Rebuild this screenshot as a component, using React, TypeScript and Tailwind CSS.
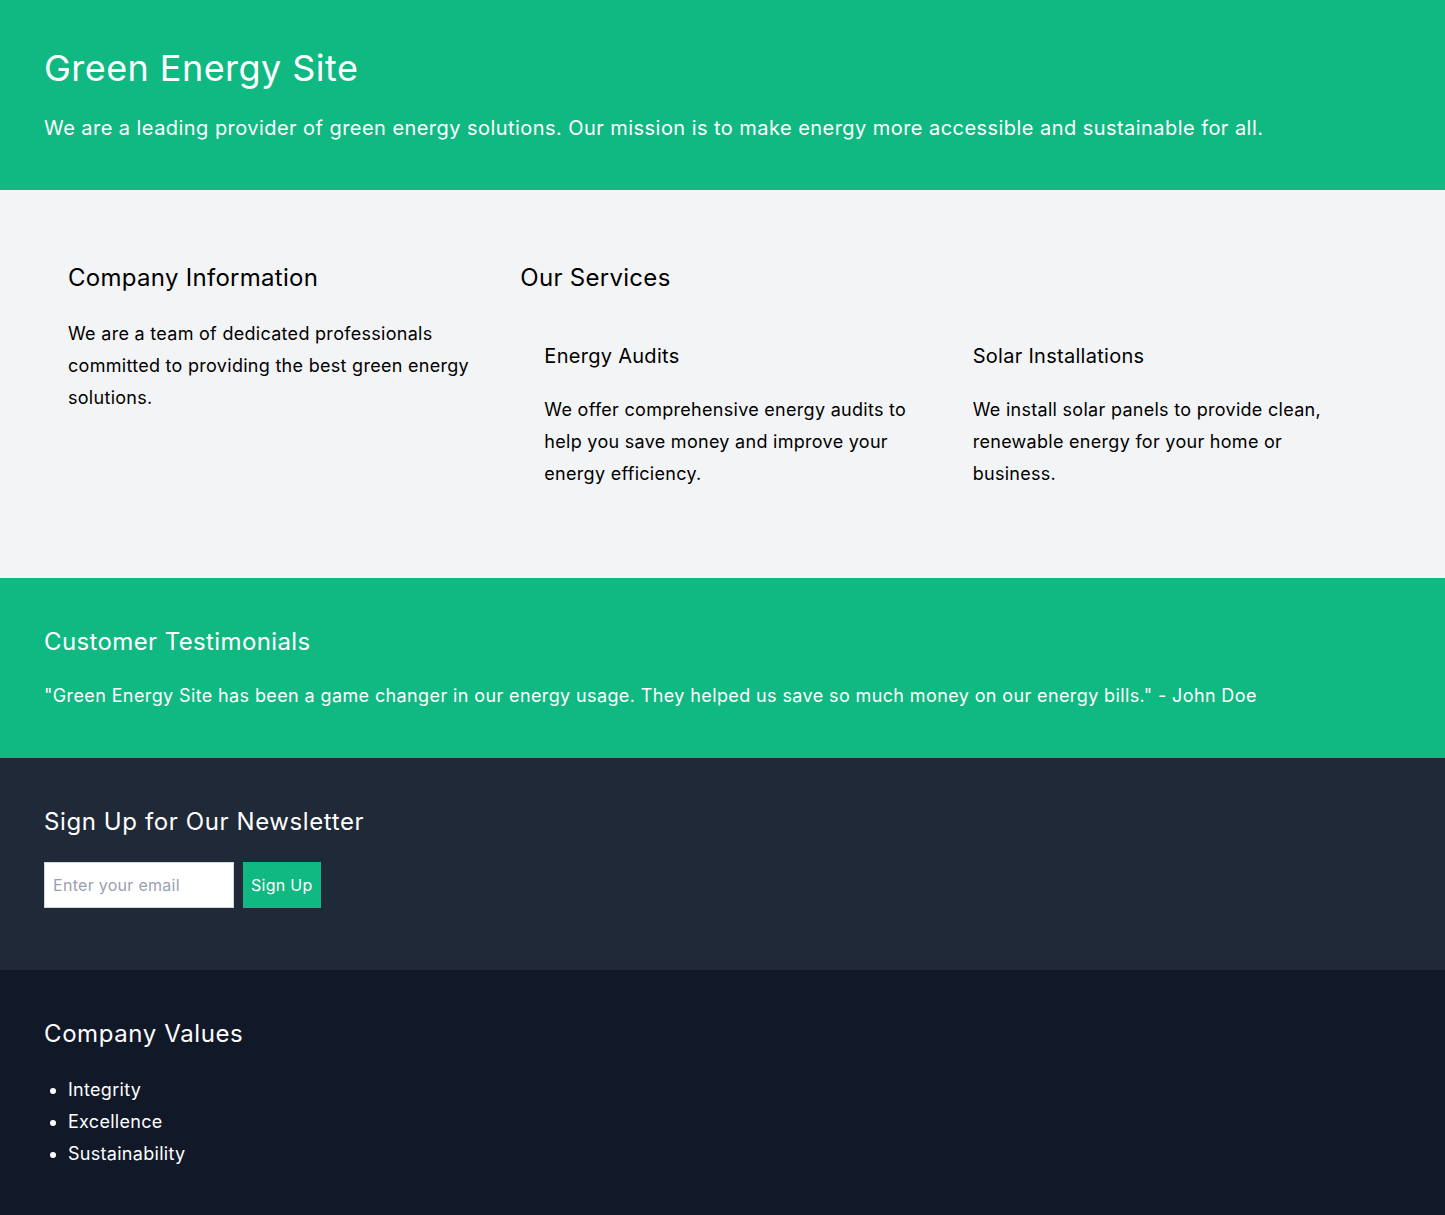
import React from "react";

export default function App() {
  return (
    <div className="min-h-screen bg-gray-100 font-['Inter',sans-serif] tracking-[0.018em] text-black">
      {/* Hero */}
      <header className="bg-[#10b981] px-11 py-12 tracking-[0.028em] text-white">
        <h1 className="mb-[26px] text-4xl">Green Energy Site</h1>
        <p className="text-xl">
          We are a leading provider of green energy solutions. Our mission is to make energy more
          accessible and sustainable for all.
        </p>
      </header>

      {/* About + services */}
      <section className="bg-[#f3f4f6] px-11 pt-12 pb-10">
        <div className="flex">
          <div className="w-1/3 p-6">
            <h2 className="mb-6 text-2xl">Company Information</h2>
            <p className="text-lg leading-8">
              We are a team of dedicated professionals committed to providing the best green energy
              solutions.
            </p>
          </div>
          <div className="w-2/3 p-6">
            <h2 className="mb-6 text-2xl">Our Services</h2>
            <div className="grid grid-cols-2">
              <div className="p-6">
                <h3 className="mb-6 text-xl">Energy Audits</h3>
                <p className="text-lg leading-8">
                  We offer comprehensive energy audits to help you save money and improve your
                  energy efficiency.
                </p>
              </div>
              <div className="p-6">
                <h3 className="mb-6 text-xl">Solar Installations</h3>
                <p className="text-lg leading-8">
                  We install solar panels to provide clean, renewable energy for your home or
                  business.
                </p>
              </div>
            </div>
          </div>
        </div>
      </section>

      {/* Testimonials */}
      <section className="bg-[#10b981] px-11 py-12 tracking-[0.024em] text-white">
        <h2 className="mb-6 text-2xl">Customer Testimonials</h2>
        <p className="text-lg">
          "Green Energy Site has been a game changer in our energy usage. They helped us save so much
          money on our energy bills." - John Doe
        </p>
      </section>

      {/* Newsletter */}
      <section className="bg-[#1f2937] px-11 pt-12 pb-[62px] text-white">
        <h2 className="mb-6 text-2xl tracking-[0.025em]">Sign Up for Our Newsletter</h2>
        <form className="flex h-[46px] items-stretch gap-[9px]" onSubmit={(e) => e.preventDefault()}>
          <input
            type="email"
            placeholder="Enter your email"
            className="w-[190px] border border-gray-300 bg-white px-2 text-base text-gray-900 placeholder:text-gray-400"
          />
          <button type="submit" className="bg-[#10b981] px-2 text-base text-white">
            Sign Up
          </button>
        </form>
      </section>

      {/* Values */}
      <section className="bg-[#111827] px-11 py-12 text-white">
        <h2 className="mb-6 text-2xl tracking-[0.025em]">Company Values</h2>
        <ul className="list-disc pl-6 text-lg leading-8">
          <li>Integrity</li>
          <li>Excellence</li>
          <li>Sustainability</li>
        </ul>
      </section>
    </div>
  );
}
